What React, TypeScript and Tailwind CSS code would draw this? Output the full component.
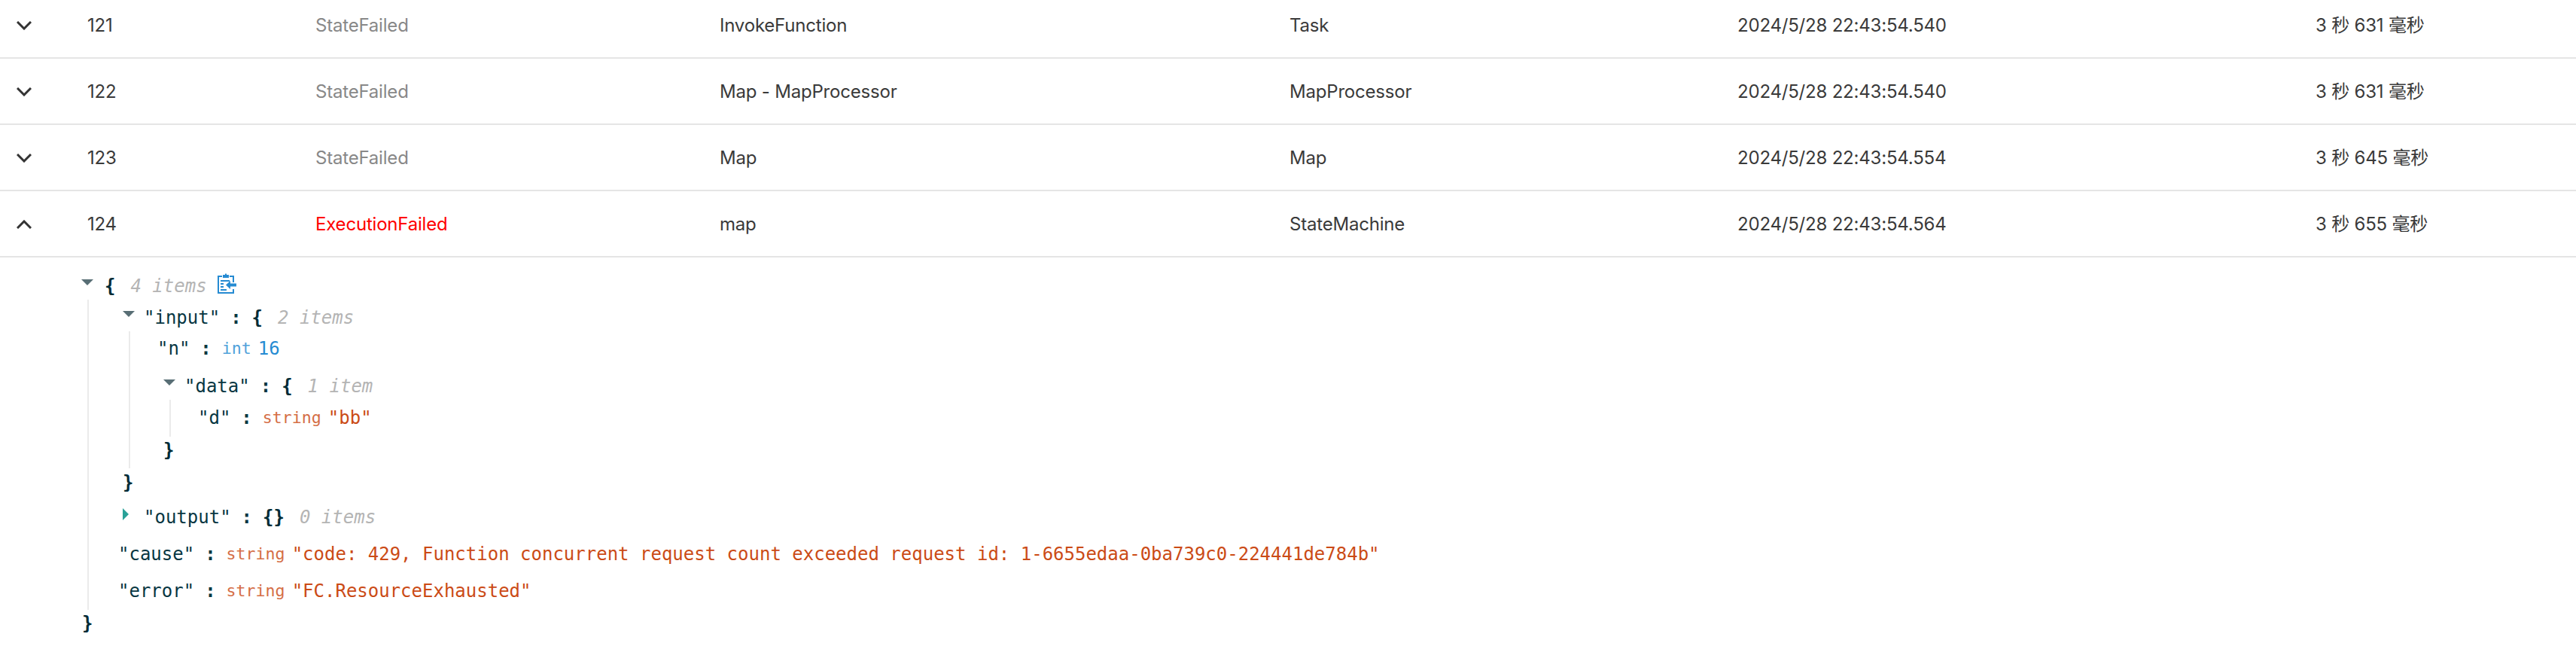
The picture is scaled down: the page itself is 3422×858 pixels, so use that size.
const rows = [
  { id: '121', type: 'StateFailed', name: 'InvokeFunction', kind: 'Task', time: '2024/5/28 22:43:54.540', dur: '3 秒 631 毫秒' },
  { id: '122', type: 'StateFailed', name: 'Map - MapProcessor', kind: 'MapProcessor', time: '2024/5/28 22:43:54.540', dur: '3 秒 631 毫秒' },
  { id: '123', type: 'StateFailed', name: 'Map', kind: 'Map', time: '2024/5/28 22:43:54.554', dur: '3 秒 645 毫秒' },
  { id: '124', type: 'ExecutionFailed', name: 'map', kind: 'StateMachine', time: '2024/5/28 22:43:54.564', dur: '3 秒 655 毫秒', open: true },
];

function Chevron({ open }: { open?: boolean }) {
  return (
    <svg width="20" height="12" viewBox="0 0 20 12" fill="none" stroke="#333" strokeWidth="3" className="ml-[22px]">
      <path d={open ? 'M1 11 L10 2 L19 11' : 'M1 1 L10 10 L19 1'} />
    </svg>
  );
}

function Caret({ collapsed }: { collapsed?: boolean }) {
  if (collapsed) {
    return (
      <svg width="8" height="16" viewBox="0 0 8 16" className="absolute left-0 top-[3px]">
        <path d="M0 0 L8 8 L0 16 Z" fill="#2aa198" />
      </svg>
    );
  }
  return (
    <svg width="16" height="8" viewBox="0 0 16 8" className="absolute left-0 top-[6px]">
      <path d="M0 0 L16 0 L8 8 Z" fill="#586e75" />
    </svg>
  );
}

function CopyIcon() {
  return (
    <svg width="26" height="28" viewBox="0 0 26 28" fill="none" className="ml-[13px] -mt-[6px]">
      <path d="M7 4 H2 V26 H22 V21 M22 12 V4 H17" stroke="#268bd2" strokeWidth="2" />
      <path d="M8 4 V2 H11 V0.5 H13 V2 H16 V4 V6 H8 Z" fill="#268bd2" />
      <path d="M5 10 H17 M5 14 H9 M5 18 H9 M5 22 H13" stroke="#268bd2" strokeWidth="2" />
      <path d="M26 13.5 H18 V10 L12 15.5 L18 21 V17.5 H26 Z" fill="#268bd2" />
    </svg>
  );
}

function Key({ k }: { k: string }) {
  return (
    <>
      <span className="text-[#073642]">"{k}"</span>
      <span className="mx-[14px] font-bold text-[#073642]">:</span>
    </>
  );
}

function Brace({ c }: { c: string }) {
  return <span className="font-bold text-[#002b36]">{c}</span>;
}

function Meta({ t }: { t: string }) {
  return <span className="ml-[20px] italic text-[#b4b4b4]">{t}</span>;
}

function Str({ v }: { v: string }) {
  return (
    <>
      <span className="mr-[9px] text-[21.6px] text-[#cb4b16] opacity-80">string</span>
      <span className="text-[#cb4b16]">"{v}"</span>
    </>
  );
}

function JsonView() {
  return (
    <div className="ml-[108px] font-['DejaVu_Sans_Mono',monospace] text-[24px] leading-[30px] tracking-normal whitespace-pre">
      <div className="relative mt-[23px] flex h-[30px] items-center pl-[31px]">
        <Caret />
        <Brace c="{" />
        <Meta t="4 items" />
        <CopyIcon />
      </div>
      <div className="ml-[8px] mt-[3px] border-l-2 border-[#ebebeb] pl-[45px] pt-[9px] pb-[10px]">
        <div className="relative flex h-[30px] items-center pl-[28px]">
          <Caret />
          <Key k="input" />
          <Brace c="{" />
          <Meta t="2 items" />
        </div>
        <div className="ml-[8px] mt-[3px] border-l-2 border-[#ebebeb] pl-[36px] pt-[8px] pb-[9px]">
          <div className="flex h-[30px] items-center">
            <Key k="n" />
            <span className="mr-[9px] text-[21.6px] text-[#268bd2] opacity-80">int</span>
            <span className="text-[#268bd2]">16</span>
          </div>
          <div className="relative ml-[8px] mt-[20px] flex h-[30px] items-center pl-[28px]">
            <Caret />
            <Key k="data" />
            <Brace c="{" />
            <Meta t="1 item" />
          </div>
          <div className="ml-[16px] mt-[3px] border-l-2 border-[#ebebeb] pl-[36px] pt-[9px] pb-[10px]">
            <div className="flex h-[30px] items-center">
              <Key k="d" />
              <Str v="bb" />
            </div>
          </div>
          <div className="ml-[8px] mt-[3px] flex h-[30px] items-center">
            <Brace c="}" />
          </div>
        </div>
        <div className="mt-[4px] flex h-[30px] items-center">
          <Brace c="}" />
        </div>
        <div className="relative mt-[16px] flex h-[30px] items-center pl-[28px]">
          <Caret collapsed />
          <Key k="output" />
          <Brace c="{}" />
          <Meta t="0 items" />
        </div>
        <div className="-ml-[6px] mt-[19px] flex h-[30px] items-center">
          <Key k="cause" />
          <Str v="code: 429, Function concurrent request count exceeded request id: 1-6655edaa-0ba739c0-224441de784b" />
        </div>
        <div className="-ml-[6px] mt-[19px] flex h-[30px] items-center">
          <Key k="error" />
          <Str v="FC.ResourceExhausted" />
        </div>
      </div>
      <div className="ml-[1px] mt-[3px] flex h-[30px] items-center">
        <Brace c="}" />
      </div>
    </div>
  );
}

export default function App() {
  return (
    <div className="h-[858px] overflow-hidden bg-white font-['Inter','Noto_Sans_CJK_SC',sans-serif] text-[24px] tracking-[-0.2px] text-[#3a3a3a]">
      <div className="-mt-[10px]">
        {rows.map((r) => (
          <div
            key={r.id}
            className="grid h-[88px] grid-cols-[116px_303px_537px_757px_595px_768px_1fr] items-center border-b-2 border-[#e5e5e5] pt-[2px]"
          >
            <Chevron open={r.open} />
            <div>{r.id}</div>
            <div className={r.open ? 'text-[#ff0000]' : 'text-[#888]'}>{r.type}</div>
            <div>{r.name}</div>
            <div>{r.kind}</div>
            <div>{r.time}</div>
            <div>{r.dur}</div>
          </div>
        ))}
      </div>
      <JsonView />
    </div>
  );
}
